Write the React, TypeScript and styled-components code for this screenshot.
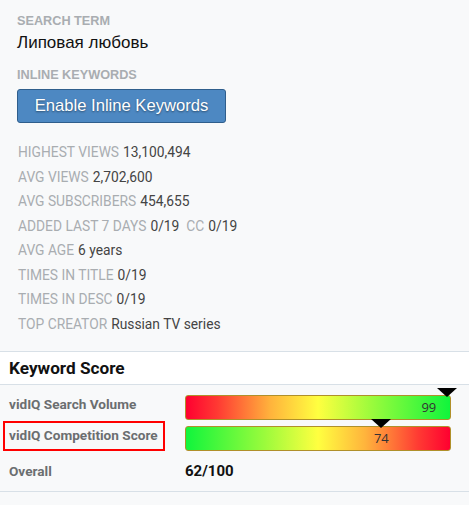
import { FunctionComponent } from 'react';
import styled, { createGlobalStyle } from 'styled-components';

const GlobalStyle = createGlobalStyle`
  body {
    margin: 0;
    background-color: #f8f9fa;
    font-family: 'Roboto', 'Liberation Sans', sans-serif;
  }
`;

const Page = styled.div`
  width: 469px;
  height: 505px;
  overflow: hidden;
`;

const TopSection = styled.div`
  display: flex;
  flex-direction: column;
  padding: 14px 0 0 17px;
`;

const SmallHeading = styled.div`
  font-family: 'Liberation Sans', Arial, sans-serif;
  font-weight: 700;
  font-size: 12.7px;
  line-height: 14px;
  color: #a9adb1;
  margin-top: ${(p: { $top?: number }) => p.$top ?? 0}px;
`;

const SearchTerm = styled.div`
  font-family: 'Liberation Sans', Arial, sans-serif;
  font-size: 17px;
  line-height: 21px;
  color: #111;
  margin-top: 4px;
`;

const EnableButton = styled.button`
  margin-top: 7px;
  width: 209px;
  height: 34px;
  background-color: #4d88c2;
  border: 1px solid #2f5e8c;
  border-radius: 3px;
  color: #fff;
  font-family: 'Liberation Sans', Arial, sans-serif;
  font-size: 16.6px;
  text-shadow: 0 1px 2px rgba(0, 0, 0, 0.45);
  padding: 0;
`;

const Stats = styled.div`
  display: flex;
  flex-direction: column;
  margin: 17px 0 0 1px;
`;

const StatRow = styled.div`
  font-size: 13.8px;
  line-height: 24.5px;
  white-space: nowrap;
`;

const StatLabel = styled.span`
  color: #a9adb1;
  margin-right: 4px;
`;

const StatValue = styled.span`
  color: #444;
  margin-right: 7px;
`;

const ScoreHeader = styled.div`
  margin-top: 15px;
  height: 32px;
  display: flex;
  align-items: center;
  padding-left: 9px;
  background-color: #fff;
  border-top: 1px solid #d8e0e7;
  border-bottom: 1px solid #d8e0e7;
  font-weight: 700;
  font-size: 17.2px;
  color: #111;
`;

const ScoreGrid = styled.div`
  display: grid;
  grid-template-columns: 176px 266px;
  row-gap: 6px;
  padding: 10px 0 0 9px;
  height: 96px;
  border-bottom: 1px solid #d8e0e7;
  align-content: start;
`;

const ScoreLabel = styled.div<{ $boxed?: boolean }>`
  font-weight: 700;
  font-size: 13.6px;
  line-height: 18px;
  color: #6b6e70;
  position: relative;
  &::after {
    content: '';
    display: ${(p) => (p.$boxed ? 'block' : 'none')};
    position: absolute;
    left: -6px;
    top: -5px;
    width: 158px;
    height: 26px;
    border: 2px solid #ff0000;
  }
`;

const BarTrack = styled.div<{ $reverse?: boolean }>`
  position: relative;
  height: 23px;
  border: 1px solid #b0902a;
  border-radius: 3px;
  background: linear-gradient(
    to right,
    ${(p) =>
      p.$reverse
        ? '#10f53c 0%, #9cfb3c 30%, #ffff40 50%, #ffb33c 68%, #ff3a33 88%, #ff0030 100%'
        : '#ff0030 0%, #ff3a33 12%, #ffb33c 32%, #ffff40 50%, #9cfb3c 70%, #10f53c 100%'}
  );
`;

const Marker = styled.div`
  position: absolute;
  top: -8px;
  width: 0;
  height: 0;
  border-left: 10px solid transparent;
  border-right: 10px solid transparent;
  border-top: 9px solid #000;
  transform: translateX(-50%);
`;

const BarValue = styled.span`
  position: absolute;
  top: 0;
  line-height: 23px;
  font-family: 'Open Sans', 'Noto Sans', sans-serif;
  font-size: 13px;
  color: #333;
  transform: translateX(-50%);
`;

const Overall = styled.div<{ $dark?: boolean }>`
  display: flex;
  align-items: center;
  height: 28px;
  font-weight: 700;
  font-size: ${(p) => (p.$dark ? 15 : 13.6)}px;
  color: ${(p) => (p.$dark ? '#111' : '#6b6e70')};
`;

interface ScoreBarProps {
  value: number;
  reverse?: boolean;
  textPos: number;
}

const ScoreBar: FunctionComponent<ScoreBarProps> = ({ value, reverse, textPos }) => (
  <BarTrack $reverse={reverse}>
    <Marker style={{ left: `${value}%` }} />
    <BarValue style={{ left: `${textPos}%` }}>{value}</BarValue>
  </BarTrack>
);

const stats: { label: string; value: string; extra?: [string, string] }[] = [
  { label: 'HIGHEST VIEWS', value: '13,100,494' },
  { label: 'AVG VIEWS', value: '2,702,600' },
  { label: 'AVG SUBSCRIBERS', value: '454,655' },
  { label: 'ADDED LAST 7 DAYS', value: '0/19', extra: ['CC', '0/19'] },
  { label: 'AVG AGE', value: '6 years' },
  { label: 'TIMES IN TITLE', value: '0/19' },
  { label: 'TIMES IN DESC', value: '0/19' },
  { label: 'TOP CREATOR', value: 'Russian TV series' },
];

const App: FunctionComponent = () => {
  return (
    <Page>
      <GlobalStyle />
      <TopSection>
        <SmallHeading>SEARCH TERM</SmallHeading>
        <SearchTerm>Липовая любовь</SearchTerm>
        <SmallHeading $top={15}>INLINE KEYWORDS</SmallHeading>
        <EnableButton>Enable Inline Keywords</EnableButton>
        <Stats>
          {stats.map((s) => (
            <StatRow key={s.label}>
              <StatLabel>{s.label}</StatLabel>
              <StatValue>{s.value}</StatValue>
              {s.extra && (
                <>
                  <StatLabel>{s.extra[0]}</StatLabel>
                  <StatValue>{s.extra[1]}</StatValue>
                </>
              )}
            </StatRow>
          ))}
        </Stats>
      </TopSection>
      <ScoreHeader>Keyword Score</ScoreHeader>
      <ScoreGrid>
        <ScoreLabel>vidIQ Search Volume</ScoreLabel>
        <ScoreBar value={99} textPos={92} />
        <ScoreLabel $boxed>vidIQ Competition Score</ScoreLabel>
        <ScoreBar value={74} reverse textPos={74} />
        <Overall>Overall</Overall>
        <Overall $dark>62/100</Overall>
      </ScoreGrid>
    </Page>
  );
};

export default App;
